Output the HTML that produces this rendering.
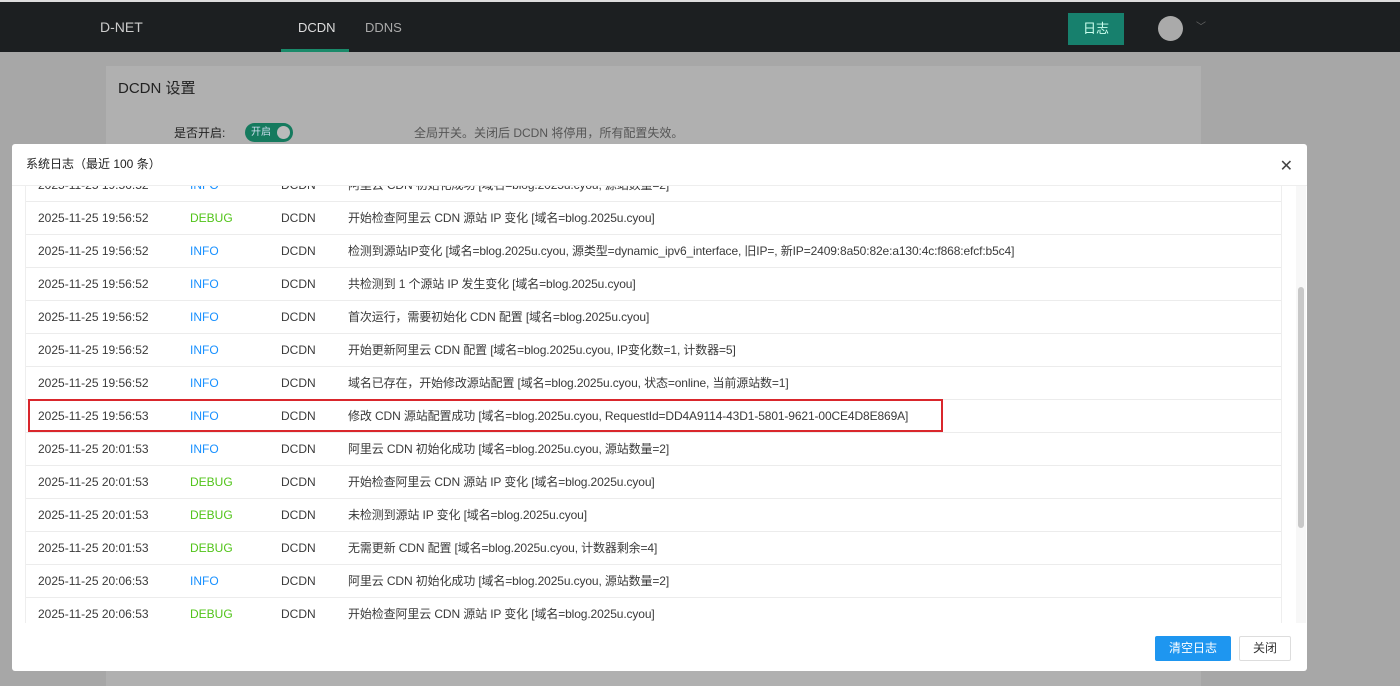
<!DOCTYPE html>
<html><head><meta charset="utf-8">
<style>
*{margin:0;padding:0;box-sizing:border-box}
body{width:1400px;height:685px;overflow:hidden;background:#a7a7a7;font-family:"Liberation Sans","Noto Sans CJK SC",sans-serif;position:relative;color:#333}
.hdr{position:absolute;left:0;top:0;width:1400px;height:52px;background:#1c1f21;border-top:2px solid #ddd}
.hdr .logo{position:absolute;left:100px;top:17px;color:#ccc;font-size:14px}
.hdr .nav{position:absolute;top:18px;font-size:13px;color:#aaa}
.hdr .ul{position:absolute;left:281px;top:47px;width:68px;height:3px;background:#1a8a6a}
.logbtn{position:absolute;left:1068px;top:11px;width:56px;height:32px;background:#17806d;color:#cfe;font-size:13px;text-align:center;line-height:32px}
.av{position:absolute;left:1158px;top:14px;width:25px;height:25px;border-radius:50%;background:#aaa}
.card{position:absolute;left:106px;top:66px;width:1095px;height:620px;background:#b0b0b0}
.card h3{position:absolute;left:12px;top:11px;font-size:15px;font-weight:normal;color:#222}
.sw{position:absolute;left:245px;top:123px;width:48px;height:19px;border-radius:10px;background:#157a5e;color:#cde;font-size:10px;line-height:19px;padding-left:6px}
.sw i{position:absolute;right:3px;top:3px;width:13px;height:13px;border-radius:50%;background:#bbb}
.modal{position:absolute;left:12px;top:144px;width:1295px;height:527px;background:#fff;border-radius:3px}
.mt{height:42px;border-bottom:1px solid #eee;font-size:12px;line-height:40px;padding-left:14px;color:#222}
.x{position:absolute;right:14px;top:12px;font-size:16px;color:#444}
.tbl{position:absolute;left:13px;top:42px;width:1257px;height:437px;overflow:hidden;border-left:1px solid #eee;border-right:1px solid #eee}
.rows{position:absolute;left:0;top:-17px;width:100%}
.r{height:33px;border-bottom:1px solid #ececec;position:relative;font-size:12px;line-height:33px;white-space:nowrap;color:#3a3a3a}
.r span{position:absolute}
.d{left:12px}.l{left:164px}.s{left:255px}.m{left:322px;letter-spacing:-0.12px}
.info{color:#1890ff}.debug{color:#52c41a}
.sb{position:absolute;left:1284px;top:42px;width:10px;height:437px;background:#f7f7f7}
.sb i{position:absolute;left:2px;top:101px;width:6px;height:241px;background:#c8c8c8;border-radius:3px}
.red{position:absolute;left:16px;top:255px;width:915px;height:33px;border:2px solid #d9262c}
.b1{position:absolute;left:1143px;top:492px;width:76px;height:25px;background:#1e96f0;color:#fff;font-size:12px;text-align:center;line-height:25px;border-radius:2px}
.b2{position:absolute;left:1227px;top:492px;width:52px;height:25px;border:1px solid #ddd;font-size:12px;text-align:center;line-height:23px;border-radius:2px}
</style></head><body>
<div class="hdr"><div class="logo">D-NET</div><div class="nav" style="left:298px;color:#ddd">DCDN</div><div class="nav" style="left:365px">DDNS</div><div class="ul"></div><div class="logbtn">日志</div><div class="av"></div><div class="nav" style="left:1196px;top:16px;font-size:10px;color:#666">﹀</div></div>
<div class="card"><h3>DCDN 设置</h3><div style="position:absolute;left:68px;top:58px;font-size:12px;color:#222">是否开启:</div><div style="position:absolute;left:308px;top:58px;font-size:12px;color:#555">全局开关。关闭后 DCDN 将停用，所有配置失效。</div></div>
<div class="sw">开启<i></i></div>
<div class="modal">
<div class="mt">系统日志（最近 100 条）</div><div class="x">✕</div>
<div class="tbl"><div class="rows">
<div class="r"><span class="d">2025-11-25 19:56:52</span><span class="l info">INFO</span><span class="s">DCDN</span><span class="m">阿里云 CDN 初始化成功 [域名=blog.2025u.cyou, 源站数量=2]</span></div>
<div class="r"><span class="d">2025-11-25 19:56:52</span><span class="l debug">DEBUG</span><span class="s">DCDN</span><span class="m">开始检查阿里云 CDN 源站 IP 变化 [域名=blog.2025u.cyou]</span></div>
<div class="r"><span class="d">2025-11-25 19:56:52</span><span class="l info">INFO</span><span class="s">DCDN</span><span class="m">检测到源站IP变化 [域名=blog.2025u.cyou, 源类型=dynamic_ipv6_interface, 旧IP=, 新IP=2409:8a50:82e:a130:4c:f868:efcf:b5c4]</span></div>
<div class="r"><span class="d">2025-11-25 19:56:52</span><span class="l info">INFO</span><span class="s">DCDN</span><span class="m">共检测到 1 个源站 IP 发生变化 [域名=blog.2025u.cyou]</span></div>
<div class="r"><span class="d">2025-11-25 19:56:52</span><span class="l info">INFO</span><span class="s">DCDN</span><span class="m">首次运行，需要初始化 CDN 配置 [域名=blog.2025u.cyou]</span></div>
<div class="r"><span class="d">2025-11-25 19:56:52</span><span class="l info">INFO</span><span class="s">DCDN</span><span class="m">开始更新阿里云 CDN 配置 [域名=blog.2025u.cyou, IP变化数=1, 计数器=5]</span></div>
<div class="r"><span class="d">2025-11-25 19:56:52</span><span class="l info">INFO</span><span class="s">DCDN</span><span class="m">域名已存在，开始修改源站配置 [域名=blog.2025u.cyou, 状态=online, 当前源站数=1]</span></div>
<div class="r"><span class="d">2025-11-25 19:56:53</span><span class="l info">INFO</span><span class="s">DCDN</span><span class="m">修改 CDN 源站配置成功 [域名=blog.2025u.cyou, RequestId=DD4A9114-43D1-5801-9621-00CE4D8E869A]</span></div>
<div class="r"><span class="d">2025-11-25 20:01:53</span><span class="l info">INFO</span><span class="s">DCDN</span><span class="m">阿里云 CDN 初始化成功 [域名=blog.2025u.cyou, 源站数量=2]</span></div>
<div class="r"><span class="d">2025-11-25 20:01:53</span><span class="l debug">DEBUG</span><span class="s">DCDN</span><span class="m">开始检查阿里云 CDN 源站 IP 变化 [域名=blog.2025u.cyou]</span></div>
<div class="r"><span class="d">2025-11-25 20:01:53</span><span class="l debug">DEBUG</span><span class="s">DCDN</span><span class="m">未检测到源站 IP 变化 [域名=blog.2025u.cyou]</span></div>
<div class="r"><span class="d">2025-11-25 20:01:53</span><span class="l debug">DEBUG</span><span class="s">DCDN</span><span class="m">无需更新 CDN 配置 [域名=blog.2025u.cyou, 计数器剩余=4]</span></div>
<div class="r"><span class="d">2025-11-25 20:06:53</span><span class="l info">INFO</span><span class="s">DCDN</span><span class="m">阿里云 CDN 初始化成功 [域名=blog.2025u.cyou, 源站数量=2]</span></div>
<div class="r"><span class="d">2025-11-25 20:06:53</span><span class="l debug">DEBUG</span><span class="s">DCDN</span><span class="m">开始检查阿里云 CDN 源站 IP 变化 [域名=blog.2025u.cyou]</span></div>
</div></div>
<div class="sb"><i></i></div>
<div class="red"></div>
<div class="b1">清空日志</div><div class="b2">关闭</div>
</div>
</body></html>
